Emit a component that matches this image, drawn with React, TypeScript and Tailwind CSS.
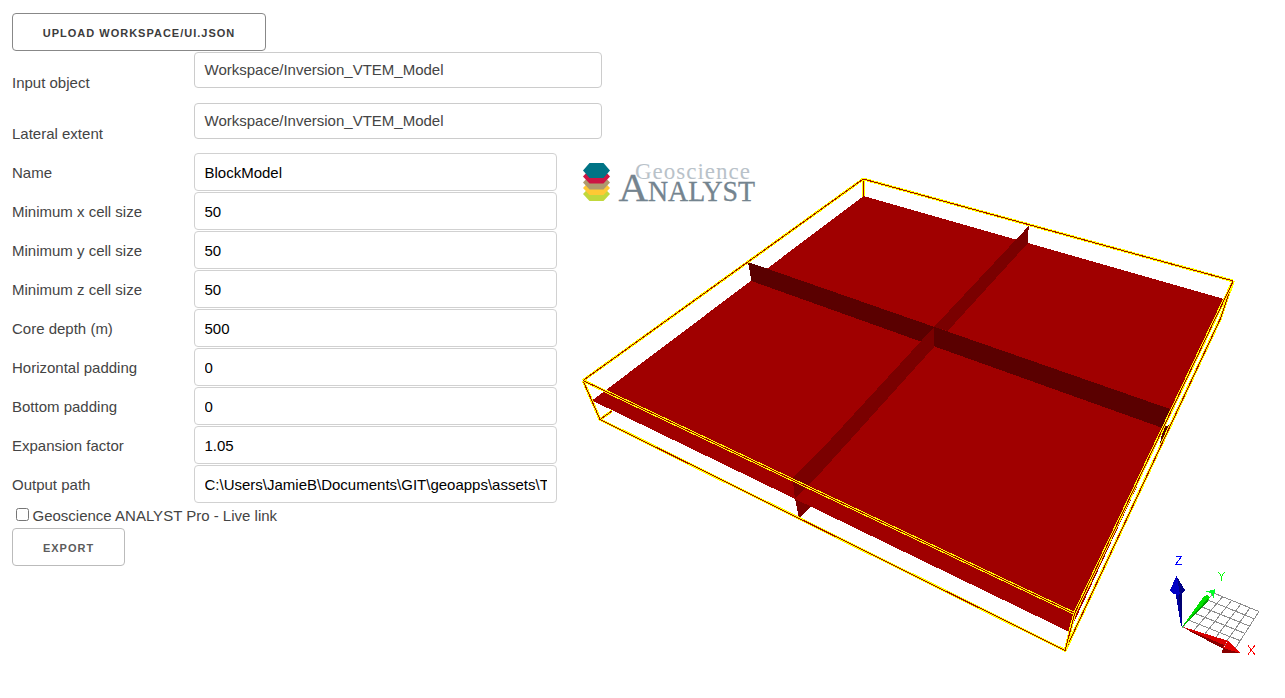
import type { ReactNode } from "react";

const outline = [
  "M600 419.500L612 411",
  "M583 380.500L863.200 179L1233.200 281",
  "M1233.200 281L1220.200 319L1065.200 650.500L600 419.500L583 380.500",
  "M583 380.500L1074.600 613.500L1233.200 281",
  "M1074.600 613.500L1065.200 650.500",
];

const fields: [string, string][] = [
  ["Name", "BlockModel"],
  ["Minimum x cell size", "50"],
  ["Minimum y cell size", "50"],
  ["Minimum z cell size", "50"],
  ["Core depth (m)", "500"],
  ["Horizontal padding", "0"],
  ["Bottom padding", "0"],
  ["Expansion factor", "1.05"],
  ["Output path", "C:\\Users\\JamieB\\Documents\\GIT\\geoapps\\assets\\Temp"],
];

function Button({ children, className }: { children: ReactNode; className: string }) {
  return (
    <button
      className={`block h-[38px] rounded-[4px] border bg-white pt-[2px] text-center text-[11px] font-semibold tracking-[1px] whitespace-nowrap ${className}`}
    >
      {children}
    </button>
  );
}

function Dropdown({ label, value }: { label: string; value: string }) {
  return (
    <div className="flex h-[51px]">
      <label className="w-[182px] shrink-0 pt-[19px] leading-6">{label}</label>
      <div className="h-9 w-[408px] shrink-0 rounded-[4px] border border-[#ccc] px-[9.5px] leading-[34px] text-[#444]">
        {value}
      </div>
    </div>
  );
}

function Logo() {
  const layers = [
    { y: 194, fill: "#c1d83c" },
    { y: 188, fill: "#ffc934" },
    { y: 182.5, fill: "#af9a6d" },
    { y: 176.5, fill: "#cc1543" },
  ];
  return (
    <g>
      {layers.map(({ y, fill }) => (
        <path key={y} d={`M583 ${y}l6.500 -7h14l6.500 7l-6.500 7h-14z`} fill={fill} />
      ))}
      <path d="M583 170.500l6.500 -7.500h14l6.500 7.500l-6.500 7.500h-14z" fill="#007385" />
      <g fontFamily="'Liberation Serif', serif">
        <text x="635" y="179" fontSize="23" fill="#b9c2c9" textLength="115">Geoscience</text>
        <text y="201" fill="#74848f" stroke="#74848f" strokeWidth="0.300">
          <tspan x="618.500" fontSize="41" textLength="29">A</tspan>
          <tspan x="648" fontSize="29" textLength="107" lengthAdjust="spacingAndGlyphs">NALYST</tspan>
        </text>
      </g>
    </g>
  );
}

type Point = [number, number];

const gridOrigin: Point = [1182.5, 627];
const gridX: Point = [1235.5, 648];
const gridY: Point = [1213.5, 593];
const gridFar: Point = [1259, 611.5];

function between(a: Point, b: Point, t: number): Point {
  return [a[0] + (b[0] - a[0]) * t, a[1] + (b[1] - a[1]) * t];
}

const gridLines = [0, 0.2, 0.4, 0.6, 0.8, 1].flatMap((t) => [
  [between(gridOrigin, gridX, t), between(gridY, gridFar, t)],
  [between(gridOrigin, gridY, t), between(gridX, gridFar, t)],
]);

function Axes() {
  return (
    <g shapeRendering="crispEdges">
      <g stroke="#8c8c8c">
        {gridLines.map(([a, b], i) => (
          <line key={i} x1={a[0]} y1={a[1]} x2={b[0]} y2={b[1]} />
        ))}
      </g>
      <path d="M1182.500 626H1181L1175.500 593H1181.500Z" fill="#00009b" />
      <path d="M1182.500 626L1178.500 594H1181.500Z" fill="#000070" />
      <path d="M1176.500 576L1170 590L1173 594L1178 595L1183 593L1185 590Z" fill="#0000c4" />
      <path d="M1177 577L1180 595L1183 593L1185 590Z" fill="#000085" />
      <path d="M1182 627L1204 596L1207 595L1210 597L1208 601Z" fill="#00e100" />
      <path d="M1182 627L1208.500 598L1208 601.500Z" fill="#00a000" />
      <path d="M1215.500 589L1206 591.500L1211 593.500L1213.500 597.500Z" fill="#00ff26" />
      <path d="M1182 626.500L1227 640.500L1223 648.500Z" fill="#d80000" />
      <path d="M1182 627L1224 645L1222.500 648.500Z" fill="#880000" />
      <path d="M1240 653L1228 640L1222 652.500Z" fill="#e00000" />
      <path d="M1240 653H1222L1223 648Z" fill="#880000" />
      <path d="M1176 556.500H1181.500L1175.500 564.500H1182" stroke="#0000ff" fill="none" />
      <path d="M1218.500 572L1221.500 576.500L1224.500 572M1221.500 576V581" stroke="#00ff00" fill="none" />
      <path d="M1248 645.500L1254.800 654.500M1254.800 645.500L1248 654.500" stroke="#ff0000" fill="none" />
    </g>
  );
}

function Scene() {
  return (
    <svg className="h-[545px] w-[711px] shrink-0" viewBox="574 153 711 545">
      <Logo />
      <g shapeRendering="crispEdges">
        <path d="M795 498L799 518.500L814 504Z" fill="#7a0000" />
        <path d="M1163 427L1159 450L1170 425Z" fill="#5a0000" />
        <rect x="862" y="179" width="3" height="20" fill="#ffff00" />
        <rect x="863" y="179" width="1" height="20" fill="#a00000" />
        <path d="M863.500 196L1224 299L1069.500 632L592 400.500Z" fill="#a00000" />
        <path d="M1028.700 226L1028 243L947.700 331L934 327Z" fill="#7a0000" />
        <path d="M748 262L1170 409L1162.500 428L751.500 281Z" fill="#5a0000" />
        <path d="M934 327V347L820 473.300L795 498.500L792.500 478L820 451Z" fill="#7a0000" />
        {outline.map((d) => (
          <g key={d} fill="none">
            <path d={d} stroke="#ffff00" strokeWidth="3" />
            <path d={d} stroke="#a00000" strokeWidth="1" />
          </g>
        ))}
      </g>
      <Axes />
    </svg>
  );
}

export default function App() {
  return (
    <div className="flex h-[698px] w-[1285px] overflow-hidden bg-white font-['Liberation_Sans',sans-serif] text-[15px] text-[#444]">
      <form className="w-[574px] shrink-0 pt-[13px] pl-3">
        <Button className="w-[254px] border-[#888] text-[#3c3c3c]">UPLOAD WORKSPACE/UI.JSON</Button>
        <div className="pt-px">
          <Dropdown label="Input object" value="Workspace/Inversion_VTEM_Model" />
          <Dropdown label="Lateral extent" value="Workspace/Inversion_VTEM_Model" />
        </div>
        <div className="-mt-px">
          {fields.map(([label, value]) => (
            <div key={label} className="flex h-[39px]">
              <label className="w-[182px] shrink-0 leading-[40px]">{label}</label>
              <input
                className="h-[38px] w-[363px] rounded-[4px] border border-[#d1d1d1] bg-white px-[9.5px] py-[6px] text-black"
                defaultValue={value}
              />
            </div>
          ))}
        </div>
        <label className="flex h-6 items-center pl-1">
          <input type="checkbox" className="mr-[3.5px] mb-[3px] size-[13px]" />
          Geoscience ANALYST Pro - Live link
        </label>
        <Button className="w-[113px] border-[#bbb] text-[#5c5c5c]">EXPORT</Button>
      </form>
      <div className="flex items-end">
        <Scene />
      </div>
    </div>
  );
}
